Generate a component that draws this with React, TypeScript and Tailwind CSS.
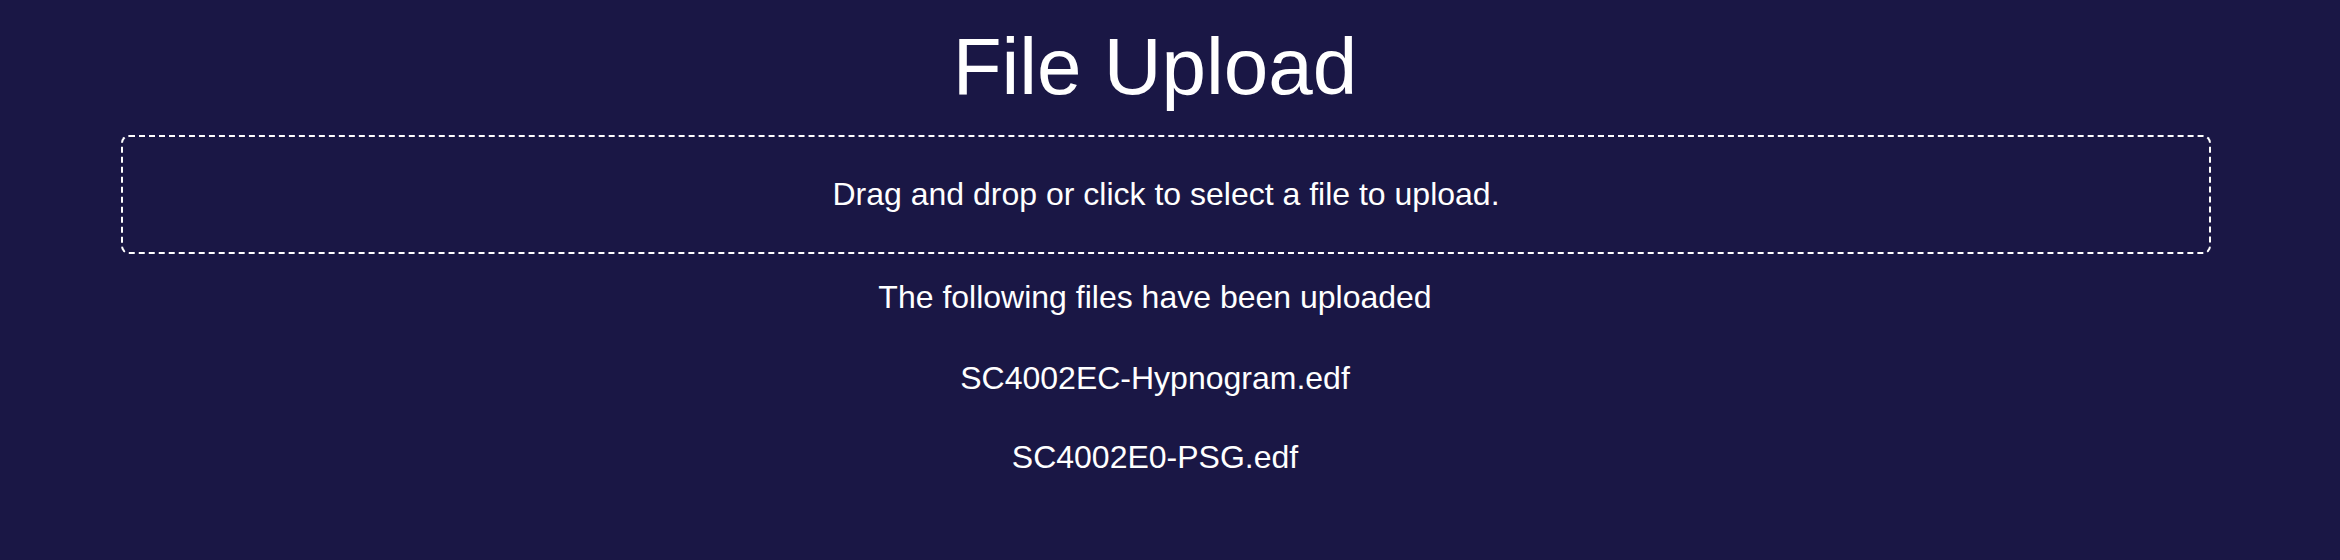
import React from "react";

export default function App() {
  const files = ["SC4002EC-Hypnogram.edf", "SC4002E0-PSG.edf"];
  return (
    <div
      className="w-[2340px] h-[560px] bg-[#1a1745] text-white overflow-hidden"
      style={{ fontFamily: '"Liberation Sans", Arial, Helvetica, sans-serif' }}
    >
      <div className="w-[2310px] pt-[21px] flex flex-col">
        <h1 className="text-center text-[80px] leading-[92px] font-normal">File Upload</h1>
        <div className="ml-[121px] w-[2090px] mt-[22px] border-2 border-dashed border-white rounded-lg py-[39px] text-center text-[32px] leading-[37px]">
          Drag and drop or click to select a file to upload.
        </div>
        <p className="mt-[25px] text-center text-[32px] leading-[37px]">
          The following files have been uploaded
        </p>
        <ul className="mt-[44px] flex flex-col gap-[42px] text-center text-[32px] leading-[37px]">
          {files.map((f) => (
            <li key={f}>{f}</li>
          ))}
        </ul>
      </div>
    </div>
  );
}
